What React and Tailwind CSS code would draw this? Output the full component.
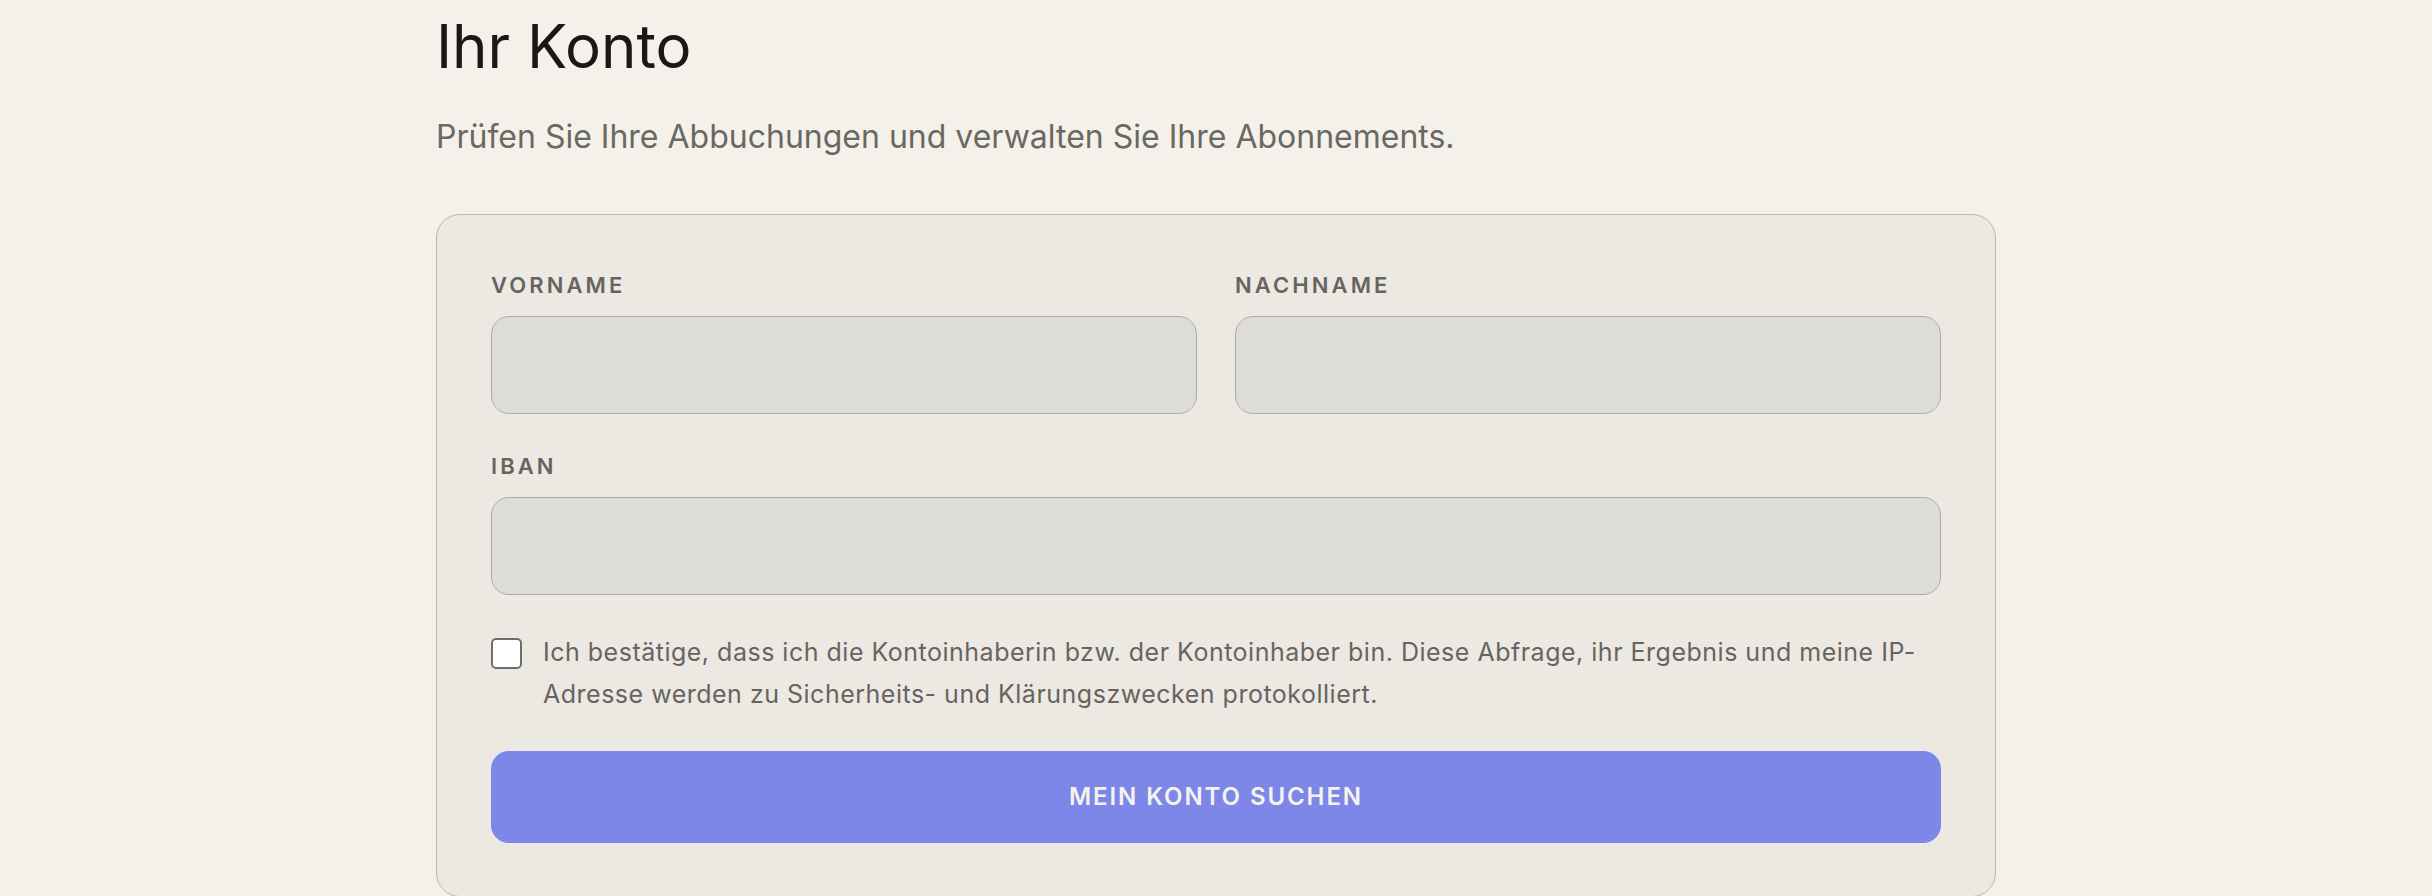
import { useState } from "react";

const Field = ({ label, className = "" }) => (
  <label className={`flex flex-col ${className}`}>
    <span className="mb-[14px] text-[22px] leading-[33px] font-semibold tracking-[0.14em] text-[#67645f] uppercase">
      {label}
    </span>
    <input
      type="text"
      className="h-[98px] w-full rounded-[18px] border-[1.5px] border-[#acaaa4] bg-[#dedcd7] px-6 text-[24px] text-[#1a1714] outline-none"
    />
  </label>
);

const App = () => {
  const [confirmed, setConfirmed] = useState(false);

  return (
    <div
      className="min-h-[896px] w-full bg-[#f4f1eb]"
      style={{ fontFamily: "Inter, 'Noto Sans', sans-serif" }}
    >
      <div className="mx-auto w-[1560px] pt-[16px]">
        <h1 className="text-[60px] leading-none font-normal text-[#1a1714]">
          Ihr Konto
        </h1>
        <p className="mt-[38px] text-[32px] leading-[45px] text-[#6b6862]">
          Prüfen Sie Ihre Abbuchungen und verwalten Sie Ihre Abonnements.
        </p>

        <form
          className="mt-[55px] flex flex-col gap-[36px] rounded-[24px] border-[1.5px] border-[#bab7b0] bg-[#ece9e3] px-[54px] pt-[54px] pb-[53px]"
          onSubmit={(e) => e.preventDefault()}
        >
          <div className="grid grid-cols-2 gap-[38px]">
            <Field label="Vorname" />
            <Field label="Nachname" />
          </div>
          <Field label="IBAN" />

          <label className="flex items-start gap-[21px]">
            <input
              type="checkbox"
              checked={confirmed}
              onChange={(e) => setConfirmed(e.target.checked)}
              className="mt-[7px] h-[31px] w-[31px] shrink-0 appearance-none rounded-[5px] border-2 border-[#6f6d69] bg-white checked:bg-[#7d87e8]"
            />
            <span className="text-[25px] leading-[42px] tracking-[0.02em] text-[#67645f]">
              Ich bestätige, dass ich die Kontoinhaberin bzw. der Kontoinhaber
              bin. Diese Abfrage, ihr Ergebnis und meine IP-Adresse werden zu
              Sicherheits- und Klärungszwecken protokolliert.
            </span>
          </label>

          <button
            type="submit"
            className="h-[92px] w-full rounded-[18px] bg-[#7d87e8] text-[24px] font-semibold tracking-[0.08em] text-[#f5f3ee] uppercase"
          >
            Mein Konto suchen
          </button>
        </form>
      </div>
    </div>
  );
};

export default App;
